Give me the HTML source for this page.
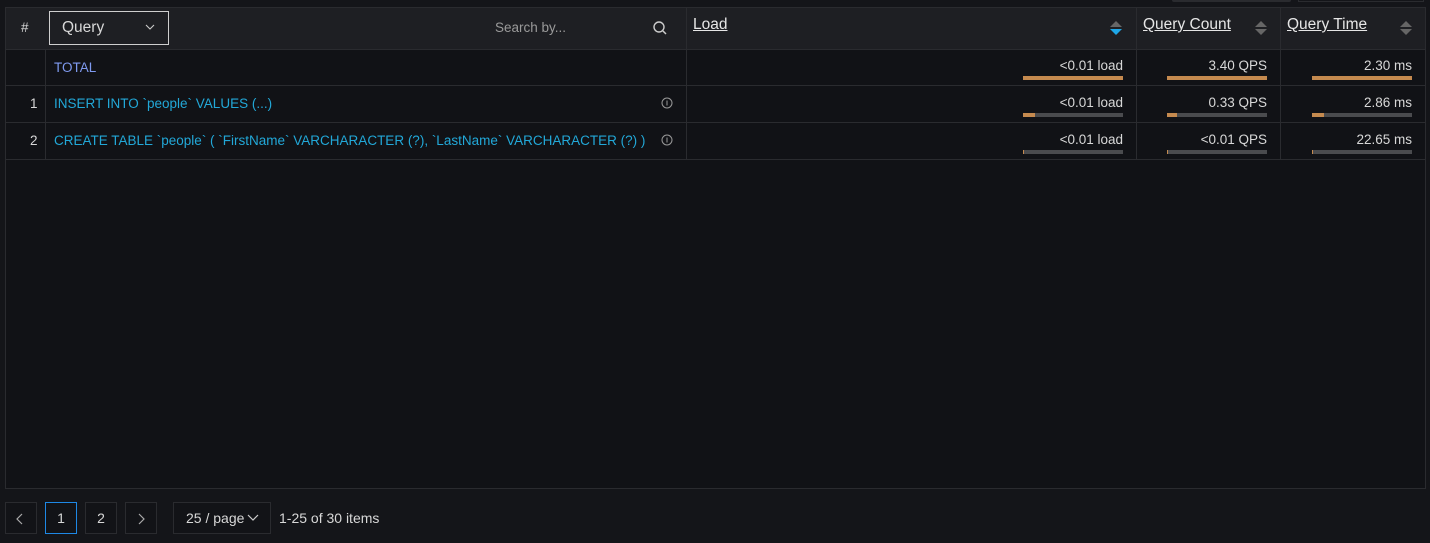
<!DOCTYPE html>
<html><head><meta charset="utf-8"><style>
*{box-sizing:border-box;margin:0;padding:0}
body{width:1430px;height:543px;background:#141519;font-family:"Liberation Sans",sans-serif;color:#d8d8d8;position:relative;overflow:hidden;font-size:14px}
.abs{position:absolute}
.tbl{left:5px;top:7px;width:1421px;height:482px;border:1px solid #2a2b2f;background:#111216}
.hdr{left:6px;top:8px;width:1419px;height:41px;background:#1e1f23}
.vl{position:absolute;width:1px;background:#2a2b2f}
.hl{position:absolute;height:1px;background:#2a2b2f;left:6px;width:1419px}
.t{position:absolute;font-size:13.5px;white-space:nowrap}
.q{color:#22a8d8}
.r{text-align:right}
.bar{position:absolute;height:4px;background:#4a4b4e}
.bar i{display:block;height:4px;background:#c58a4f}
.u{text-decoration:underline;font-size:15.5px;color:#e6e6e6}
.btn{position:absolute;top:502px;height:32px;border:1px solid #2a2b2f;background:#121317;text-align:center;line-height:30px;font-size:14px}
</style></head><body>
<div class="abs" style="left:1172px;top:0;width:119px;height:2px;background:#2a2b2f;border-radius:0 0 2px 2px"></div>
<div class="abs" style="left:1298px;top:0;width:126px;height:2px;border:1px solid #2a2b2f;border-top:none"></div>
<div class="abs tbl"></div>
<div class="abs hdr"></div>
<div class="vl" style="left:45px;top:49px;height:111px"></div>
<div class="vl" style="left:686px;top:8px;height:152px"></div>
<div class="vl" style="left:1136px;top:8px;height:152px"></div>
<div class="vl" style="left:1280px;top:8px;height:152px"></div>
<div class="hl" style="top:49px"></div>
<div class="hl" style="top:85px"></div>
<div class="hl" style="top:122px"></div>
<div class="hl" style="top:159px"></div>
<div class="t" style="left:21px;top:20px">#</div>
<div class="abs" style="left:49px;top:11px;width:120px;height:34px;border:1px solid #cfcfcf"></div>
<div class="t" style="left:62px;top:19px;font-size:15.5px">Query</div>
<svg class="abs" style="left:145px;top:23px" width="10" height="8"><path d="M1 2l4 4 4-4" fill="none" stroke="#ccc" stroke-width="1.1"/></svg>
<div class="t" style="left:495px;top:20px;color:#9a9a9a">Search by...</div>
<svg class="abs" style="left:652px;top:20px" width="16" height="16"><circle cx="7" cy="7" r="5" fill="none" stroke="#ccc" stroke-width="1.4"/><path d="M11 11l3 3" stroke="#ccc" stroke-width="1.5"/></svg>
<div class="t u" style="left:693px;top:16px">Load</div>
<div class="t u" style="left:1143px;top:16px">Query Count</div>
<div class="t u" style="left:1287px;top:16px">Query Time</div>
<svg class="abs" style="left:1109px;top:20px" width="14" height="16"><path d="M1 7l6-6 6 6z" fill="#666"/><path d="M1 9h12l-6 6z" fill="#1ea7e8"/></svg>
<svg class="abs" style="left:1254px;top:20px" width="14" height="16"><path d="M1 7l6-6 6 6z" fill="#666"/><path d="M1 9h12l-6 6z" fill="#666"/></svg>
<svg class="abs" style="left:1399px;top:20px" width="14" height="16"><path d="M1 7l6-6 6 6z" fill="#666"/><path d="M1 9h12l-6 6z" fill="#666"/></svg>

<div class="t" style="left:54px;top:60px;color:#7f9af0">TOTAL</div>
<div class="t" style="left:30px;top:96px">1</div>
<div class="t q" style="left:54px;top:96px">INSERT INTO `people` VALUES (...)</div>
<div class="t" style="left:30px;top:133px">2</div>
<div class="t q" style="left:54px;top:133px">CREATE TABLE `people` ( `FirstName` VARCHARACTER (?), `LastName` VARCHARACTER (?) )</div>
<svg class="abs" style="left:661px;top:97px" width="12" height="12"><circle cx="6" cy="6" r="5" fill="none" stroke="#999"/><path d="M6 3.5v5" stroke="#999"/></svg>
<svg class="abs" style="left:661px;top:134px" width="12" height="12"><circle cx="6" cy="6" r="5" fill="none" stroke="#999"/><path d="M6 3.5v5" stroke="#999"/></svg>

<div class="t r" style="left:980px;width:143px;top:58px">&lt;0.01 load</div>
<div class="t r" style="left:1140px;width:127px;top:58px">3.40 QPS</div>
<div class="t r" style="left:1290px;width:122px;top:58px">2.30 ms</div>
<div class="bar" style="left:1023px;top:76px;width:100px"><i style="width:100%"></i></div>
<div class="bar" style="left:1167px;top:76px;width:100px"><i style="width:100%"></i></div>
<div class="bar" style="left:1312px;top:76px;width:100px"><i style="width:100%"></i></div>

<div class="t r" style="left:980px;width:143px;top:95px">&lt;0.01 load</div>
<div class="t r" style="left:1140px;width:127px;top:95px">0.33 QPS</div>
<div class="t r" style="left:1290px;width:122px;top:95px">2.86 ms</div>
<div class="bar" style="left:1023px;top:113px;width:100px"><i style="width:12%"></i></div>
<div class="bar" style="left:1167px;top:113px;width:100px"><i style="width:10%"></i></div>
<div class="bar" style="left:1312px;top:113px;width:100px"><i style="width:12%"></i></div>

<div class="t r" style="left:980px;width:143px;top:132px">&lt;0.01 load</div>
<div class="t r" style="left:1140px;width:127px;top:132px">&lt;0.01 QPS</div>
<div class="t r" style="left:1290px;width:122px;top:132px">22.65 ms</div>
<div class="bar" style="left:1023px;top:150px;width:100px"><i style="width:1%"></i></div>
<div class="bar" style="left:1167px;top:150px;width:100px"><i style="width:1%"></i></div>
<div class="bar" style="left:1312px;top:150px;width:100px"><i style="width:1%"></i></div>

<div class="btn" style="left:5px;width:32px"></div>
<svg class="abs" style="left:16px;top:513px" width="8" height="12"><path d="M6 1l-5 5 5 5" fill="none" stroke="#aaa" stroke-width="1.2"/></svg>
<div class="btn" style="left:45px;width:32px;border-color:#1e88e5">1</div>
<div class="btn" style="left:85px;width:32px">2</div>
<div class="btn" style="left:125px;width:32px"></div>
<svg class="abs" style="left:138px;top:513px" width="8" height="12"><path d="M1 1l5 5-5 5" fill="none" stroke="#aaa" stroke-width="1.2"/></svg>
<div class="btn" style="left:173px;width:98px;text-align:left;padding-left:12px">25 / page</div>
<svg class="abs" style="left:247px;top:513px" width="12" height="10"><path d="M1 2l5 5 5-5" fill="none" stroke="#ccc" stroke-width="1.2"/></svg>
<div class="t" style="left:279px;top:510px;font-size:14px">1-25 of 30 items</div>
</body></html>
